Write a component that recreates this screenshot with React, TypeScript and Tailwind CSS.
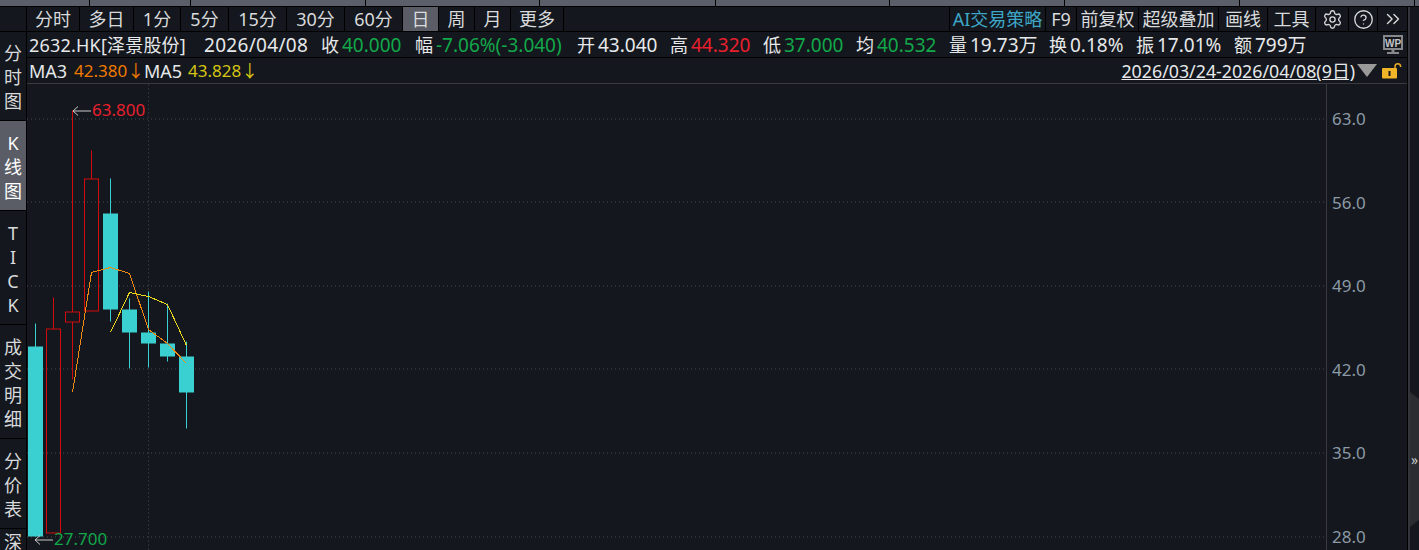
import { Settings, CircleHelp, ChevronsRight } from 'lucide-react';

const topDividers = [89, 190, 365, 539, 715, 889, 1064, 1239, 1414];

const periods = [
  { label: '分时', w: 'w-[53px]' },
  { label: '多日', w: 'w-[54px]' },
  { label: '1分', w: 'w-[47px]' },
  { label: '5分', w: 'w-[48px]' },
  { label: '15分', w: 'w-[58px]' },
  { label: '30分', w: 'w-[58px]' },
  { label: '60分', w: 'w-[58px]' },
  { label: '日', w: 'w-[36px]', active: true },
  { label: '周', w: 'w-[36px]' },
  { label: '月', w: 'w-[36px]' },
  { label: '更多', w: 'w-[53px]' },
];

const tools = [
  { label: 'F9', w: 'w-[31px]' },
  { label: '前复权', w: 'w-[62px]' },
  { label: '超级叠加', w: 'w-[80px]' },
  { label: '画线', w: 'w-[49px]' },
  { label: '工具', w: 'w-[48px]' },
];

const tabs = [
  { chars: ['分', '时', '图'], h: 'h-[89px]' },
  { chars: ['K', '线', '图'], h: 'h-[90px]', active: true },
  { chars: ['T', 'I', 'C', 'K'], h: 'h-[114px]' },
  { chars: ['成', '交', '明', '细'], h: 'h-[114px]' },
  { chars: ['分', '价', '表'], h: 'h-[90px]' },
];

const stats = [
  { k: '收', v: '40.000', c: 'text-[#12a84a]', w: 'w-[94px]' },
  { k: '幅', v: '-7.06%(-3.040)', c: 'text-[#12a84a]', w: 'w-[162px]' },
  { k: '开', v: '43.040', c: 'text-[#e6e8ea]', w: 'w-[93px]' },
  { k: '高', v: '44.320', c: 'text-[#e8202e]', w: 'w-[93px]' },
  { k: '低', v: '37.000', c: 'text-[#12a84a]', w: 'w-[93px]' },
  { k: '均', v: '40.532', c: 'text-[#12a84a]', w: 'w-[93px]' },
  { k: '量', v: '19.73万', c: 'text-[#e6e8ea]', w: 'w-[100px]' },
  { k: '换', v: '0.18%', c: 'text-[#e6e8ea]', w: 'w-[87px]' },
  { k: '振', v: '17.01%', c: 'text-[#e6e8ea]', w: 'w-[98px]' },
  { k: '额', v: '799万', c: 'text-[#e6e8ea]', w: 'w-[72px]' },
];

// pixel geometry read off the chart, in page coordinates (see viewBox)
const candles = [
  { x: 35.5, hi: 324, lo: 537, top: 347, bot: 537, up: false },
  { x: 53.5, hi: 298, lo: 533, top: 329.5, bot: 533.5, up: true },
  { x: 72.5, hi: 111, lo: 380, top: 312.5, bot: 322.5, up: true },
  { x: 91.5, hi: 151, lo: 311, top: 179.5, bot: 311.5, up: true },
  { x: 110.5, hi: 179, lo: 322, top: 214, bot: 310, up: false },
  { x: 129.5, hi: 299, lo: 369, top: 310, bot: 333, up: false },
  { x: 148.5, hi: 292, lo: 368, top: 333, bot: 344, up: false },
  { x: 167.5, hi: 304, lo: 362, top: 344, bot: 357, up: false },
  { x: 186.5, hi: 342, lo: 429, top: 357, bot: 393, up: false },
];

const ma3 = '72.5,393 91.5,273 110.5,268 129.5,274 148.5,330 167.5,344 186.5,364';
const ma5 = '110.5,333 129.5,293 148.5,297 167.5,305 186.5,346';
const gridY = [119.5, 202.5, 286.5, 369.5, 453.5, 537.5];
const prices = ['63.0', '56.0', '49.0', '42.0', '35.0', '28.0'];

function Chart() {
  return (
    <svg viewBox="27 85 1299 465" className="block h-full w-full">
      {gridY.map((y) => (
        <line key={y} x1="27" x2="1326" y1={y} y2={y} stroke="#4a4d52" strokeDasharray="1 3" />
      ))}
      <line x1="148.5" x2="148.5" y1="85" y2="550" stroke="#4a4d52" strokeDasharray="1 3" />

      {candles.map((c) =>
        c.up ? (
          <g key={c.x} stroke="#d00c0c" fill="none">
            <line x1={c.x} x2={c.x} y1={c.hi} y2={c.top} />
            <line x1={c.x} x2={c.x} y1={c.bot} y2={c.lo} />
            <rect x={c.x - 7} y={c.top} width="14" height={c.bot - c.top} />
          </g>
        ) : (
          <g key={c.x}>
            <line x1={c.x} x2={c.x} y1={c.hi} y2={c.lo} stroke="#3acfd0" />
            <rect x={c.x - 7.5} y={c.top} width="15" height={c.bot - c.top} fill="#3acfd0" />
          </g>
        ),
      )}

      <polyline points={ma3} fill="none" stroke="#f08a10" shapeRendering="crispEdges" />
      <polyline points={ma5} fill="none" stroke="#e8d820" shapeRendering="crispEdges" />

      <g stroke="#c8cacc" fill="none">
        <path d="M91 111.5H73M78 107l-5 4.5 5 4.5" />
        <path d="M53 540.5H35M40 536l-5 4.5 5 4.5" />
      </g>
    </svg>
  );
}

function Lock() {
  return (
    <svg viewBox="0 0 20 17" className="h-[17px] w-[20px]">
      <path d="M13 6V4.5a2.8 2.8 0 0 1 5.6 0V5" fill="none" stroke="#e8ab25" strokeWidth="1.5" />
      <rect x="0" y="6" width="15" height="10.5" rx="1" fill="#f0b429" />
      <rect x="6.5" y="9" width="2" height="5" fill="#14171d" />
    </svg>
  );
}

function WpMonitor() {
  return (
    <svg viewBox="0 0 20 19" className="h-[19px] w-[20px]">
      <rect x="1" y="1" width="18" height="13" fill="none" stroke="#85878b" strokeWidth="2" />
      <text x="10" y="11.5" textAnchor="middle" fontSize="10" fontWeight="700" fill="#c4c6c9" fontFamily="Liberation Sans">
        WP
      </text>
      <rect x="8.5" y="14" width="3" height="3" fill="#85878b" />
      <rect x="4" y="17" width="12" height="2" fill="#85878b" />
    </svg>
  );
}

export default function App() {
  return (
    <div
      className="flex h-[550px] w-[1419px] flex-col overflow-hidden bg-[#14171d] text-[18px] leading-6 text-[#e6e8ea]"
      style={{ fontFamily: '"Noto Sans", "Noto Sans CJK SC", sans-serif' }}
    >
      {/* window strip on top */}
      <div className="relative h-[7px] shrink-0 border-b border-black bg-[#5a5f69]">
        {topDividers.map((x) => (
          <span key={x} className="absolute top-0 h-full w-px bg-black" style={{ left: x }} />
        ))}
      </div>

      <div className="flex min-h-0 flex-1">
        {/* left tabs */}
        <div className="flex w-[27px] shrink-0 flex-col border-r border-black">
          <div className="h-[25px] shrink-0 border-b border-black" />
          {tabs.map((t, i) => (
            <div
              key={i}
              className={`flex ${t.h} shrink-0 flex-col items-center justify-center border-b border-black pt-[2px] ${t.active ? 'bg-[#5a5c66] text-white' : 'text-[#d8dadc]'}`}
            >
              {t.chars.map((ch, j) => (
                <span key={j} className="h-6">
                  {ch}
                </span>
              ))}
            </div>
          ))}
          <div className="flex flex-col items-center pt-[1px] text-[#d8dadc]">深</div>
        </div>

        {/* main column */}
        <div className="flex min-w-0 flex-1 flex-col">
          <div className="flex h-[24px] shrink-0 items-center text-[#d8dadc]">
            {periods.map((p) => (
              <div
                key={p.label}
                className={`flex h-full ${p.w} items-center justify-center border-r border-black ${p.active ? 'bg-[#5a5c66]' : ''}`}
              >
                {p.label}
              </div>
            ))}
            <div className="flex-1" />
            <div className="flex h-full w-[97px] items-center justify-center border-x border-black text-[#3ea6c6]">
              AI交易策略
            </div>
            {tools.map((t) => (
              <div key={t.label} className={`flex h-full ${t.w} items-center justify-center border-r border-black`}>
                {t.label}
              </div>
            ))}
            <div className="flex h-full w-[33px] items-center justify-center border-r border-black">
              <Settings size={21} strokeWidth={1.5} />
            </div>
            <div className="flex h-full w-[29px] items-center justify-center border-r border-black">
              <CircleHelp size={21} strokeWidth={1.5} />
            </div>
            <div className="flex h-full w-[29px] items-center justify-center">
              <ChevronsRight size={22} strokeWidth={1.5} />
            </div>
          </div>

          <div className="flex h-[27px] shrink-0 items-center border-y border-black pl-[2px] whitespace-nowrap">
            <span className="w-[175px] shrink-0 tracking-[0.2px]">2632.HK[泽景股份]</span>
            <span className="w-[117px] shrink-0 text-[19px] tracking-[0.3px]">2026/04/08</span>
            {stats.map((s) => (
              <span key={s.k} className={`${s.w} flex shrink-0`}>
                <span className="w-[21px] shrink-0">{s.k}</span>
                <span className={`${s.c} text-[19px]`}>{s.v}</span>
              </span>
            ))}
            <span className="ml-auto pr-[4px]">
              <WpMonitor />
            </span>
          </div>

          <div className="flex h-[26px] shrink-0 items-center border-b border-[#3a3a3e] pl-[2px] whitespace-nowrap">
            <span className="w-[45px]">MA3</span>
            <span className="w-[70px] text-[17px] text-[#f07a00]">42.380↓</span>
            <span className="w-[44px]">MA5</span>
            <span className="text-[17px] text-[#d6c515]">43.828↓</span>
            <span className="ml-auto text-[17.8px] underline">2026/03/24-2026/04/08(9日)</span>
            <span className="mr-[5px] ml-[2px] h-0 w-0 border-x-[10px] border-t-[13px] border-x-transparent border-t-[#9a9a9a]" />
            <span className="pr-[5px]">
              <Lock />
            </span>
          </div>

          <div className="flex min-h-0 flex-1">
            <div className="relative min-w-0 flex-1">
              <Chart />
              <span className="absolute top-[14px] left-[65px] text-[17px] text-[#e8202e]">63.800</span>
              <span className="absolute top-[443px] left-[27px] text-[17px] text-[#12a84a]">27.700</span>
            </div>
            <div className="flex w-[81px] shrink-0 flex-col gap-[59.6px] border-l border-[#3a3a3e] pt-[23px] pl-[5px] text-[17px] text-[#8b9aa6]">
              {prices.map((p) => (
                <span key={p} className="h-6">
                  {p}
                </span>
              ))}
            </div>
          </div>
        </div>

        {/* right rail with the collapse handle */}
        <div className="flex w-[12px] shrink-0 items-start border-l border-black">
          <div className="h-full w-[2px] shrink-0 bg-[#33353b]" />
          <div className="mt-[385px] flex h-[135px] flex-1 items-center justify-center bg-[#2a2c31] text-[14px] text-[#c8cacc] [clip-path:polygon(0_0,100%_7px,100%_calc(100%-7px),0_100%)]">
            »
          </div>
        </div>
      </div>
    </div>
  );
}
